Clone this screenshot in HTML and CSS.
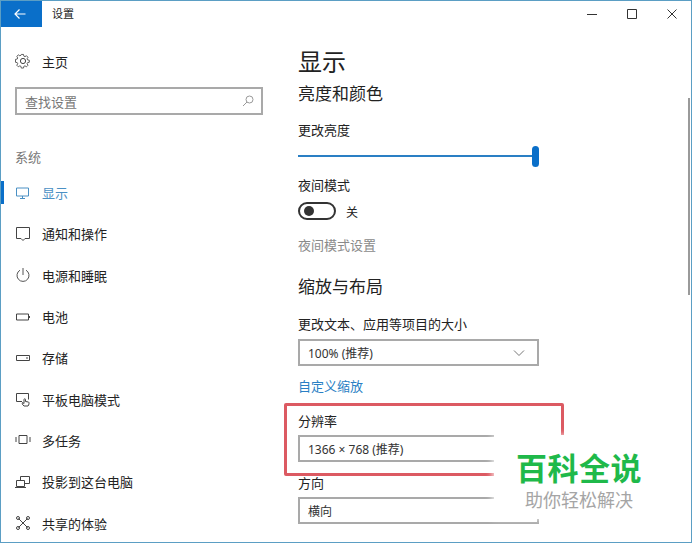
FILE: index.html
```html
<!DOCTYPE html>
<html lang="zh-CN">
<head>
<meta charset="utf-8">
<title>设置</title>
<link rel="stylesheet" href="styles.css">
</head>
<body>
<div class="window">
  <aside class="sidebar">
    <div class="titlebar">
      <div class="back"><svg width="14" height="14" viewBox="0 0 14 14"><path d="M12.500 7H2M6.500 2.500 2 7l4.500 4.500" fill="none" stroke="#fff" stroke-width="1.200"/></svg></div>
      <span class="apptitle">设置</span>
    </div>
    <div class="home">
      <svg class="ic" width="16" height="16" viewBox="0 0 16 16"><g fill="none" stroke="#444" stroke-width="1"><circle cx="8" cy="8" r="2.600"/><path d="M6.700 1h2.600l.4 2 1.300.6 1.800-1.100 1.800 1.800-1.100 1.800.6 1.300 2 .4v2.400l-2 .4-.6 1.300 1.100 1.800-1.800 1.800-1.800-1.100-1.300.6-.4 2H6.700l-.4-2-1.300-.6-1.800 1.100-1.800-1.800 1.100-1.800-.6-1.300-2-.4V6.800l2-.4.6-1.300-1.100-1.800 1.800-1.800 1.800 1.100 1.300-.6z" transform="translate(.6 .6) scale(.85)"/></g></svg>
      <span>主页</span>
    </div>
    <div class="search">
      <span>查找设置</span>
      <svg width="12" height="12" viewBox="0 0 12 12"><g fill="none" stroke="#999" stroke-width="1"><circle cx="7.500" cy="4.500" r="3.500"/><path d="M5 7 1 11"/></g></svg>
    </div>
    <div class="group">系统</div>
    <nav class="nav">
      <div class="item active">
        <svg class="ic" width="16" height="16" viewBox="0 0 16 16"><path d="M1.500 3h12v8h-12zM7.500 11v2M5 13.500h5" fill="none" stroke="#4a90c4"/></svg>
        <span>显示</span>
      </div>
      <div class="item">
        <svg class="ic" width="16" height="16" viewBox="0 0 16 16"><path d="M1.500 1.500h13v11H10L8 14.500 6 12.500H1.500z" fill="none" stroke="#444"/></svg>
        <span>通知和操作</span>
      </div>
      <div class="item">
        <svg class="ic" width="16" height="16" viewBox="0 0 16 16"><path d="M5 3.200a6 6 0 1 0 6 0M8 1v7" fill="none" stroke="#555"/></svg>
        <span>电源和睡眠</span>
      </div>
      <div class="item">
        <svg class="ic" width="16" height="16" viewBox="0 0 16 16"><path d="M1.500 5h12v6h-12zM14.500 7v2" fill="none" stroke="#444"/></svg>
        <span>电池</span>
      </div>
      <div class="item">
        <svg class="ic" width="16" height="16" viewBox="0 0 16 16"><path d="M1.500 5.500h13v5h-13zM11 8h2" fill="none" stroke="#444"/></svg>
        <span>存储</span>
      </div>
      <div class="item">
        <svg class="ic" width="16" height="16" viewBox="0 0 16 16"><path d="M7 10.500H1.500v-8h12v6M9 15c-2-1.500-2-3-1.500-3.500L9 12.500V8.500c0-1 1.500-1 1.500 0v2l3 .5c1 .5.500 3-.5 4z" fill="none" stroke="#444"/></svg>
        <span>平板电脑模式</span>
      </div>
      <div class="item">
        <svg class="ic" width="16" height="16" viewBox="0 0 16 16"><path d="M4 3.500h8v8H4zM1 5v5M15 5v5" fill="none" stroke="#444"/></svg>
        <span>多任务</span>
      </div>
      <div class="item">
        <svg class="ic" width="16" height="16" viewBox="0 0 16 16"><path d="M5.500 6V2.500h9v7H10M1.500 6.500h8v6h-8zM0 13.500h11" fill="none" stroke="#444"/></svg>
        <span>投影到这台电脑</span>
      </div>
      <div class="item">
        <svg class="ic" width="16" height="16" viewBox="0 0 16 16"><g fill="none" stroke="#444"><path d="M3.500 3.500l9 9M12.500 3.500l-9 9"/><circle cx="3" cy="3" r="1.500"/><circle cx="13" cy="3" r="1.500"/><circle cx="3" cy="13" r="1.500"/><circle cx="13" cy="13" r="1.500"/></g></svg>
        <span>共享的体验</span>
      </div>
    </nav>
  </aside>

  <main class="content">
    <div class="winbtns">
      <svg width="12" height="12" viewBox="0 0 12 12"><path d="M1 6.500h10" stroke="#333"/></svg>
      <svg width="12" height="12" viewBox="0 0 12 12"><path d="M1.500 1.500h9v9h-9z" fill="none" stroke="#333"/></svg>
      <svg width="12" height="12" viewBox="0 0 12 12"><path d="M1.500 1.500l9 9M10.500 1.500l-9 9" stroke="#333"/></svg>
    </div>
    <h1>显示</h1>
    <h2 class="first">亮度和颜色</h2>
    <div class="label l-bright">更改亮度</div>
    <div class="slider"><div class="thumb"></div></div>
    <div class="label l-night">夜间模式</div>
    <div class="toggle-row">
      <div class="toggle"><div class="knob"></div></div>
      <span>关</span>
    </div>
    <div class="muted">夜间模式设置</div>
    <h2 class="second">缩放与布局</h2>
    <div class="label l-size">更改文本、应用等项目的大小</div>
    <div class="select">
      <span>100% (推荐)</span>
      <svg width="12" height="8" viewBox="0 0 12 8"><path d="M1 1.500l5 5 5-5" fill="none" stroke="#777"/></svg>
    </div>
    <div class="link">自定义缩放</div>
    <div class="label l-res">分辨率</div>
    <div class="select tight"><span>1366 × 768 (推荐)</span></div>
    <div class="label l-dir">方向</div>
    <div class="select tight"><span>横向</span></div>
  </main>

  <div class="scrollbar"></div>
  <div class="redbox"></div>
  <div class="watermark">
    <div class="wm-title">百科全说</div>
    <div class="wm-sub">助你轻松解决</div>
  </div>
</div>
</body>
</html>
```

FILE: styles.css
```css
* { box-sizing: border-box; }
html, body { margin: 0; padding: 0; }
body {
  width: 692px;
  height: 544px;
  overflow: hidden;
  background: #fff;
  font-family: "Noto Sans CJK SC", "Liberation Sans", sans-serif;
  color: #222;
}
.window {
  position: relative;
  display: flex;
  width: 692px;
  height: 543px;
  overflow: hidden;
  border: 1px solid #5b9ec4;
  background: #fff;
}
.sidebar { width: 297px; flex: none; }
.titlebar { display: flex; align-items: center; height: 26px; }
.back {
  display: flex;
  align-items: center;
  justify-content: center;
  width: 41px;
  height: 26px;
  background: #0a6fc9;
  padding-right: 3px;
}
.apptitle { margin-left: 10px; padding-bottom: 2px; font-size: 11px; line-height: 24px; }
.home {
  display: flex;
  align-items: center;
  height: 20px;
  margin: 24px 0 0 14px;
  font-size: 13px;
}
.ic { flex: none; margin-right: 11px; }
.search {
  display: flex;
  align-items: center;
  justify-content: space-between;
  width: 248px;
  height: 28px;
  margin: 16px 0 0 14px;
  padding: 0 7px 0 8px;
  border: 2px solid #a9a9a9;
  font-size: 13px;
  color: #777;
}
.group { margin: 33px 0 0 14px; font-size: 13px; line-height: 18px; color: #777; }
.nav { margin-top: 6px; }
.item {
  position: relative;
  display: flex;
  align-items: center;
  height: 41.300px;
  padding-left: 14px;
  font-size: 13px;
}
.item.active { color: #4a90c4; }
.item.active::before {
  content: "";
  position: absolute;
  left: 0;
  top: 9px;
  width: 3px;
  height: 23px;
  background: #0a6fc9;
}
.content { flex: 1; min-width: 0; }
.winbtns {
  display: flex;
  justify-content: flex-end;
  gap: 28px;
  height: 27px;
  padding: 7px 13px 0 0;
}
h1 { margin: 15px 0 0; font-size: 24px; font-weight: 400; line-height: 36px; color: #222; }
h2 { margin: 0; font-size: 17px; font-weight: 400; line-height: 26px; color: #222; }
h2.first { margin-top: 1px; }
h2.second { margin-top: 19px; }
.label { font-size: 13px; line-height: 18px; }
.l-bright { margin-top: 15px; }
.l-night { margin-top: 19px; }
.l-size { margin-top: 16px; }
.l-res { margin-top: 17px; }
.l-dir { margin-top: 12px; }
.slider {
  position: relative;
  width: 241px;
  height: 2px;
  margin-top: 16px;
  background: #2a7fc4;
}
.thumb {
  position: absolute;
  right: 0;
  top: -9px;
  width: 7px;
  height: 21px;
  border-radius: 3.500px;
  background: #0a6fc9;
}
.toggle-row {
  display: flex;
  align-items: center;
  gap: 10px;
  height: 18px;
  margin-top: 8px;
  font-size: 12px;
}
.toggle {
  display: flex;
  align-items: center;
  width: 38px;
  height: 18px;
  padding-left: 4px;
  border: 2px solid #333;
  border-radius: 9px;
}
.knob { width: 10px; height: 10px; border-radius: 50%; background: #333; }
.muted { margin-top: 16px; font-size: 13px; line-height: 18px; color: #8a8a8a; }
.select {
  display: flex;
  align-items: center;
  justify-content: space-between;
  width: 241px;
  height: 27px;
  margin-top: 6px;
  padding: 0 12px 0 8px;
  border: 2px solid #a9a9a9;
  font-family: "Noto Sans", "Noto Sans CJK SC", sans-serif;
  font-size: 12px;
  color: #333;
}
.select.tight { margin-top: 5px; }
.link { margin-top: 11px; font-size: 13px; line-height: 18px; color: #2a7fc4; }
.scrollbar {
  position: absolute;
  right: 1px;
  top: 97px;
  width: 2px;
  height: 197px;
  background: #9a9a9a;
}
.redbox {
  position: absolute;
  left: 283px;
  top: 402px;
  width: 280px;
  height: 73px;
  border: 3px solid #dc5a62;
  border-radius: 2px;
}
.watermark {
  position: absolute;
  left: 493px;
  top: 434px;
  width: 190px;
  height: 84px;
  padding: 12px 0 0 22px;
  background: #fff;
  box-shadow: -2px 0 6px rgba(255, 255, 255, .8);
}
.wm-title {
  font-size: 31px;
  font-weight: 700;
  line-height: 40px;
  letter-spacing: .5px;
  color: #1fb94a;
}
.wm-sub {
  margin: 1px 0 0 9px;
  font-size: 18px;
  line-height: 22px;
  color: #a5a5a5;
}
```
